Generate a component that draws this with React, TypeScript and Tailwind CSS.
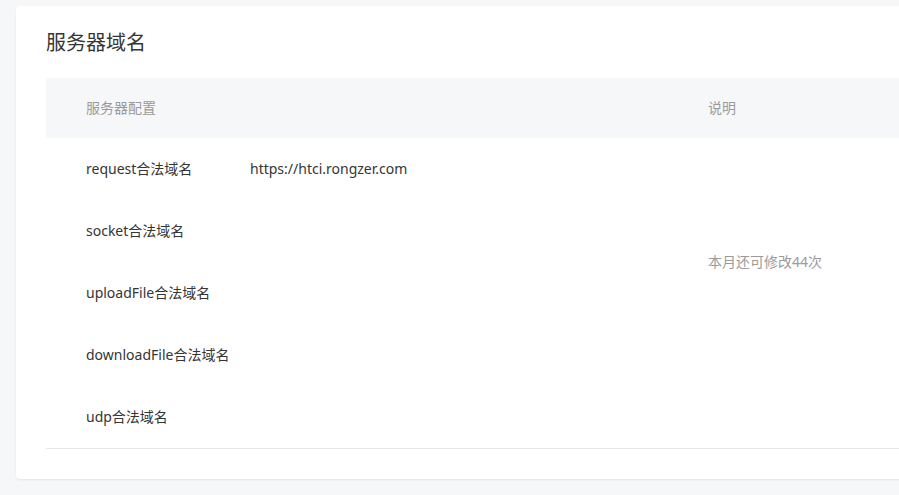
import React from 'react';

const rows = [
  { name: 'request合法域名', value: 'https://htci.rongzer.com' },
  { name: 'socket合法域名', value: '' },
  { name: 'uploadFile合法域名', value: '' },
  { name: 'downloadFile合法域名', value: '' },
  { name: 'udp合法域名', value: '' },
];

const font = { fontFamily: '"Noto Sans", "Noto Sans CJK SC", sans-serif' };

export default function App() {
  return (
    <div className="w-[899px] h-[495px] overflow-hidden bg-[#f6f7f9] pt-[6px] pl-4" style={font}>
      <div className="w-[940px] bg-white rounded-[4px] shadow-[0_1px_2px_rgba(0,0,0,0.08)] px-[30px] pt-[23px] pb-[30px]">
        <h2 className="text-[20px] leading-[28px] text-[#353535] font-normal">服务器域名</h2>

        <div className="mt-[21px] border-b border-[#e7e7e7]">
          {/* Header */}
          <div className="flex h-[60px] items-center pb-[2px] bg-[#f6f7f9] text-[14px] text-[#9a9a9a]">
            <div className="w-[622px] pl-10">服务器配置</div>
            <div className="flex-1 pl-10">说明</div>
          </div>

          {/* Body */}
          <div className="flex">
            <div className="w-[622px]">
              {rows.map((row) => (
                <div key={row.name} className="flex h-[62px] items-center pb-[2px] pl-10 text-[14px] text-[#353535]">
                  <div className="w-[164px]">{row.name}</div>
                  <div>{row.value}</div>
                </div>
              ))}
            </div>
            <div className="flex-1 pl-10">
              <div className="flex h-[248px] items-center pb-[2px] text-[14px] text-[#9a9a9a]">本月还可修改44次</div>
            </div>
          </div>
        </div>
      </div>
    </div>
  );
}
